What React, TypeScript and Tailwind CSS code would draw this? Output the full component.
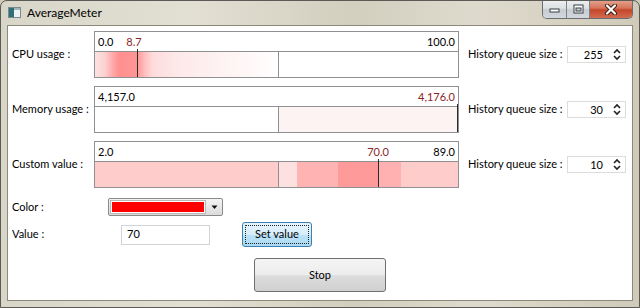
import React from 'react';

type Stop = [number, string];

type Meter = {
  label: string;
  min: string;
  max: string;
  current: string;
  // pixel positions inside the 363px bar
  marker: number;
  currentAt: number | 'right';
  queue: number;
  fill: Stop[];
};

const meters: Meter[] = [
  {
    label: 'CPU usage :',
    min: '0.0',
    max: '100.0',
    current: '8.7',
    marker: 42,
    currentAt: 39,
    queue: 255,
    fill: [
      [0, '#fde2e2'],
      [10, '#fcd0d0'],
      [18, '#ffa8a8'],
      [24, '#ff9090'],
      [42, '#ff9494'],
      [50, '#ffc0c0'],
      [58, '#fedcdc'],
      [80, '#fde8e8'],
      [120, '#fef1f1'],
      [160, '#fff9f9'],
      [182, '#ffffff'],
      [363, '#ffffff'],
    ],
  },
  {
    label: 'Memory usage :',
    min: '4,157.0',
    max: '',
    current: '4,176.0',
    marker: 362,
    currentAt: 'right',
    queue: 30,
    fill: [
      [0, '#ffffff'],
      [183, '#ffffff'],
      [183, '#fdf3f3'],
      [363, '#fdf3f3'],
    ],
  },
  {
    label: 'Custom value :',
    min: '2.0',
    max: '89.0',
    current: '70.0',
    marker: 283,
    currentAt: 283,
    queue: 10,
    fill: [
      [0, '#ffcccc'],
      [183, '#ffcccc'],
      [183, '#fde0e0'],
      [202, '#fde0e0'],
      [202, '#ffb3b3'],
      [243, '#ffb3b3'],
      [243, '#ff9a9a'],
      [283, '#ff9a9a'],
      [283, '#ffb0b0'],
      [306, '#ffb0b0'],
      [306, '#ffcccc'],
      [363, '#ffcccc'],
    ],
  },
];

const toGradient = (stops: Stop[]) =>
  `linear-gradient(90deg, ${stops.map(([p, c]) => `${c} ${p}px`).join(', ')})`;

const MeterBar = ({ m }: { m: Meter }) => (
  <div className="relative w-[365px] h-[47px] border border-[#8e9091] flex flex-col bg-white">
    <div className="h-[20px] flex items-center justify-between px-[3px] border-b border-[#8e9091] leading-none">
      <span>{m.min}</span>
      {m.currentAt === 'right' ? (
        <span className="text-[#8a2626]">{m.current}</span>
      ) : (
        <span>{m.max}</span>
      )}
    </div>
    <div className="relative flex-1" style={{ background: toGradient(m.fill) }}>
      <div className="absolute left-[183px] top-0 bottom-0 w-px bg-[#8e9091]" />
    </div>
    {m.currentAt !== 'right' && (
      <span
        className="absolute top-[4px] -translate-x-1/2 leading-none text-[#8a2626]"
        style={{ left: m.currentAt }}
      >
        {m.current}
      </span>
    )}
    <div className="absolute top-[17px] bottom-0 w-px bg-[#2a2a2a]" style={{ left: m.marker }} />
  </div>
);

const Spinner = ({ value }: { value: number }) => (
  <div className="w-[59px] h-[17px] border border-[#dcdcdc] flex items-center bg-white">
    <span className="flex-1 text-right pr-[8px] leading-none">{value}</span>
    <svg width="12" height="13" viewBox="0 0 12 13" className="mr-[2px]">
      <path d="M3 5 L6 2 L9 5" fill="none" stroke="#222" strokeWidth="1.6" />
      <path d="M3 8 L6 11 L9 8" fill="none" stroke="#222" strokeWidth="1.6" />
    </svg>
  </div>
);

const CaptionButtons = () => (
  <div className="flex self-start -mt-px h-[19px] rounded-b-[5px] border border-t-0 border-[#6a6d72] overflow-hidden">
    <div className="w-[24px] flex items-center justify-center bg-[linear-gradient(180deg,#eef0f1_0%,#dde1e4_45%,#c6ccd1_55%,#d2d8dc_100%)] border-r border-[#7d8287]">
      <svg width="11" height="8" viewBox="0 0 11 8">
        <rect x="1" y="4" width="9" height="3" fill="#fff" stroke="#3a3f44" strokeWidth="1" />
      </svg>
    </div>
    <div className="w-[23px] flex items-center justify-center bg-[linear-gradient(180deg,#eef0f1_0%,#dde1e4_45%,#c6ccd1_55%,#d2d8dc_100%)] border-r border-[#7d8287]">
      <svg width="11" height="10" viewBox="0 0 11 10">
        <rect x="1" y="1" width="9" height="8" fill="#fff" stroke="#3a3f44" strokeWidth="1" />
        <rect x="3" y="4" width="5" height="3" fill="#c9d0d5" stroke="#3a3f44" strokeWidth="1" />
      </svg>
    </div>
    <div className="w-[42px] flex items-center justify-center bg-[linear-gradient(180deg,#e6a592_0%,#d67459_45%,#c4462c_55%,#d26d4f_100%)]">
      <svg width="14" height="11" viewBox="0 0 14 11">
        <path d="M3 1.5 L11 9.5 M11 1.5 L3 9.5" stroke="#3d1c14" strokeWidth="4" strokeLinecap="round" />
        <path d="M3 1.5 L11 9.5 M11 1.5 L3 9.5" stroke="#fff" strokeWidth="2.2" strokeLinecap="round" />
      </svg>
    </div>
  </div>
);

export default function App() {
  return (
    <div className="w-[640px] h-[308px] bg-[#cfcab9] font-['Lato',sans-serif] text-[11px] text-black">
      <div className="h-full flex flex-col rounded-t-[7px] border border-[#5b5a55] bg-[linear-gradient(90deg,#d8d5c9_0%,#e2dfd3_30%,#d3cfbf_55%,#dedacd_75%,#cfcab9_100%)] overflow-hidden">
        {/* title bar */}
        <div className="h-[24px] flex items-start">
          <div className="flex items-center h-[23px] pl-[7px] gap-[6px]">
            <svg width="13" height="11" viewBox="0 0 13 11">
              <rect x="0.5" y="0.5" width="12" height="10" fill="#eef2f2" stroke="#7c8a8c" />
              <rect x="1" y="1" width="5" height="9" fill="#2f6f78" />
              <rect x="6" y="1" width="6" height="2" fill="#9fb8bb" />
            </svg>
            <span className="text-[12px]">AverageMeter</span>
          </div>
          <div className="ml-auto mr-[6px]">
            <CaptionButtons />
          </div>
        </div>

        {/* client area */}
        <div className="flex-1 ml-[6px] mr-[6px] mb-[6px] border border-[#8c897b] bg-white pl-[4px] pt-[5px] flex flex-col">
          <div className="flex flex-col gap-[8px]">
            {meters.map((m) => (
              <div key={m.label} className="flex items-center h-[47px]">
                <div className="w-[82px]">{m.label}</div>
                <MeterBar m={m} />
                <div className="ml-[9px] w-[99px]">History queue size :</div>
                <Spinner value={m.queue} />
              </div>
            ))}
          </div>

          {/* color */}
          <div className="flex items-center h-[18px] mt-[10px]">
            <div className="w-[96px]">Color :</div>
            <div className="w-[115px] h-[18px] flex rounded-[2px] border border-[#8a8a8a] bg-[linear-gradient(180deg,#f4f4f4,#dcdcdc)]">
              <div className="flex-1 m-[1px] border border-[#b8b8b8] bg-white p-px">
                <div className="h-full bg-[#ff0000]" />
              </div>
              <div className="w-[15px] flex items-center justify-center">
                <svg width="7" height="5" viewBox="0 0 7 5">
                  <path d="M0.5 0.5 L3.5 4 L6.5 0.5 Z" fill="#111" />
                </svg>
              </div>
            </div>
          </div>

          {/* value */}
          <div className="flex items-center h-[25px] mt-[6px]">
            <div className="w-[109px]">Value :</div>
            <div className="w-[89px] h-[20px] border border-[#d0d3d8] flex items-center pl-[5px]">70</div>
            <button className="ml-[32px] w-[70px] h-[25px] rounded-[3px] border border-[#3c7fb1] bg-[linear-gradient(180deg,#e6f4fc_0%,#d6eefb_50%,#bde4f8_52%,#a9d9f3_100%)] p-[2px]">
              <div className="h-full border border-dotted border-[#222] flex items-center justify-center">
                Set value
              </div>
            </button>
          </div>

          {/* stop */}
          <button className="ml-[242px] mt-[11px] w-[132px] h-[34px] rounded-[3px] border border-[#707070] bg-[linear-gradient(180deg,#f4f4f4_0%,#ececec_50%,#dddddd_52%,#d0d0d0_100%)] flex items-center justify-center">
            Stop
          </button>
        </div>
      </div>
    </div>
  );
}
